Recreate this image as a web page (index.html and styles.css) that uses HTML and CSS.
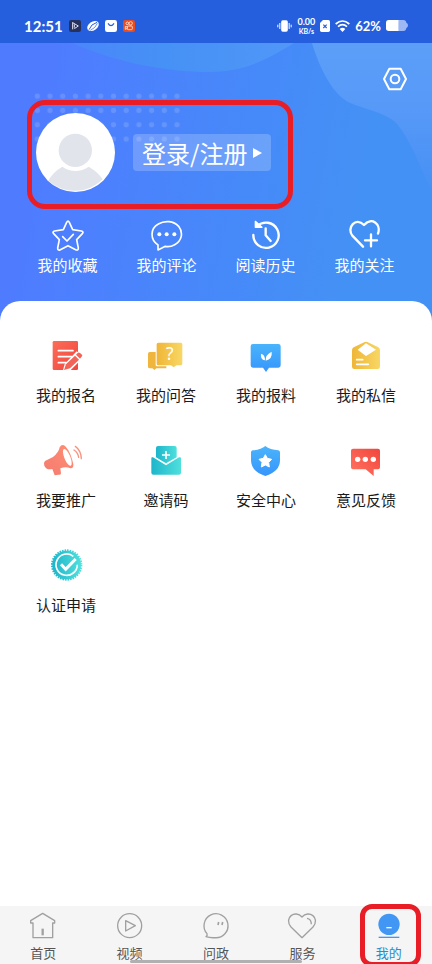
FILE: index.html
```html
<!DOCTYPE html>
<html lang="zh-CN">
<head>
<meta charset="utf-8">
<meta name="viewport" content="width=device-width, initial-scale=1">
<title>我的</title>
<link rel="stylesheet" href="styles.css">
</head>
<body>
<div class="page">
  <div class="status">
    <span class="clock">12:51</span>
    <svg class="app" viewBox="0 0 36 36"><rect width="36" height="36" rx="6" fill="#27315e"/><path d="M11 7v21M11 8l17 10-12 8M16 13v10" fill="none" stroke="#dfe5f7" stroke-width="3"/></svg>
    <svg class="app" viewBox="0 0 36 36"><ellipse cx="18" cy="18" rx="19" ry="13" transform="rotate(-35 18 18)" fill="#fff"/><path d="M6 29Q12 12 30 7" fill="none" stroke="#265fdd" stroke-width="3"/><path d="M10 31Q26 24 31 10" fill="none" stroke="#265fdd" stroke-width="2"/></svg>
    <svg class="app" viewBox="0 0 36 36"><rect width="36" height="36" rx="7" fill="#fff"/><path d="M9 10q9 14 18 0" fill="none" stroke="#265fdd" stroke-width="3.5"/></svg>
    <svg class="app" viewBox="0 0 36 36"><rect width="36" height="36" rx="6" fill="#e84c1f"/><g fill="none" stroke="#ffe9df" stroke-width="2.6"><circle cx="13" cy="10" r="4"/><circle cx="23" cy="10" r="5"/><rect x="13" y="18" width="15" height="11" rx="3"/><path d="M13 21l-6-2v9l6-3"/></g></svg>
    <div class="system">
      <svg class="vibrate" viewBox="0 0 44 36"><rect x="12" y="1" width="20" height="34" rx="5" fill="#fff"/><path d="M8 9v18M36 9v18M2 14v8M42 14v8" stroke="#fff" stroke-width="3"/></svg>
      <span class="speed"><span class="rate">0.00</span><span class="unit">KB/s</span></span>
      <svg class="sim" viewBox="0 0 30 36"><path d="M9 0h16q5 0 5 5v26q0 5-5 5H5q-5 0-5-5V9z" fill="#fff"/><path d="M10 14l10 10M20 14L10 24" stroke="#265fdd" stroke-width="3.5"/></svg>
      <svg class="wifi" viewBox="0 0 45 36"><g fill="none" stroke="#fff" stroke-width="5"><path d="M2 12q20.500-18 41 0M9 20q13.500-12 27 0"/></g><path d="M14 27q8.500-7 17 0l-8.500 9z" fill="#fff"/></svg>
      <span class="percent">62%</span>
      <svg class="battery" viewBox="0 0 66 33"><path d="M38 0h14q8 0 9 8 5 2 5 8t-5 8q-1 9-9 9H38z" fill="#9db8f5"/><path d="M8 0h30v33H8q-8 0-8-8V8q0-8 8-8z" fill="#fff"/></svg>
    </div>
  </div>

  <header class="hero">
    <svg class="backdrop" viewBox="0 0 432 278" preserveAspectRatio="none" aria-hidden="true">
      <defs>
        <linearGradient id="arc" x1="0" x2="1"><stop offset="0" stop-color="#4a86fb"/><stop offset=".4" stop-color="#4691f5"/><stop offset="1" stop-color="#5097f8"/></linearGradient>
        <linearGradient id="wave" x1="0" y1="0" x2="0" y2="1"><stop offset="0" stop-color="#5c9ff9"/><stop offset=".5" stop-color="#5598f7"/><stop offset="1" stop-color="#4690f5"/></linearGradient>
        <pattern id="dots" x="31" y="46" width="12.700" height="14.300" patternUnits="userSpaceOnUse"><circle cx="6.300" cy="7.200" r="2.600" fill="#fff" fill-opacity=".14"/></pattern>
      </defs>
      <path d="M72 0C115 19 165 29 210 29C242 28 262 20 294 0z" fill="url(#arc)"/>
      <path d="M312 0C319 24 332 50 348 59C363 66 388 70 397 81C412 99 420 124 432 148V0z" fill="url(#wave)"/>
      <rect x="31" y="46" width="152.400" height="57.200" fill="url(#dots)"/>
    </svg>
    <button class="settings" aria-label="设置"><svg viewBox="0 0 72 72"><g fill="none" stroke="#fff" stroke-width="6" stroke-linejoin="round"><path d="M19 5h34l16 31-16 31H19L3 36z"/><circle cx="36" cy="36" r="13"/></g></svg></button>
    <div class="account">
      <svg class="avatar" viewBox="0 0 237 237" aria-hidden="true"><circle cx="118.500" cy="118.500" r="118.500" fill="#fff"/><circle cx="118" cy="112" r="50" fill="#e1e4eb"/><path d="M37 203q14-26 42-42q39 26 79 0q28 16 42 38a118.500 118.500 0 0 1-163 4z" fill="#e1e4eb"/></svg>
      <button class="login"><span>登录/注册</span><svg viewBox="0 0 9 10"><path d="M0 0l9 5-9 5z" fill="#fff"/></svg></button>
    </div>
    <nav class="quick">
      <a href="#fav"><svg viewBox="0 0 96 96"><path d="M44 10q4-7 8 0l10 22 26 4q8 2 3 8L74 62l5 25q0 9-8 5L48 80 25 92q-8 4-8-5l5-25L5 44q-5-6 3-8l26-4z" stroke-width="5"/><path d="M32 53l13 13 19-20" stroke-width="5"/></svg>我的收藏</a>
      <a href="#comments"><svg viewBox="0 0 96 96"><path d="M21 93V78C-4 62-2 28 22 15C42 3 68 6 83 22C98 42 92 66 71 77C62 82 52 84 43 82z" stroke-width="5"/><g fill="#fff" stroke="none"><circle cx="25" cy="46" r="6"/><circle cx="47" cy="46" r="6"/><circle cx="70" cy="46" r="6"/></g></svg>我的评论</a>
      <a href="#history"><svg viewBox="0 0 96 96"><path d="M22 21A38 38 0 1 1 10 48" stroke-width="7"/><path d="M16 7v18h20z" fill="#fff" stroke-width="4"/><path d="M47 28v21l15 17" stroke-width="7"/></svg>阅读历史</a>
      <a href="#follow"><svg viewBox="0 0 96 96"><path d="M42 83L10 50C-8 26 20-8 45 18C68-8 97 15 87 44M66 46v36M48 64h36" stroke-width="7"/></svg>我的关注</a>
    </nav>
    <div class="mark mark-login" aria-hidden="true"></div>
  </header>

  <main class="sheet">
    <svg class="defs" aria-hidden="true"><defs>
      <linearGradient id="red" x1="0" y1="0" x2="1" y2="1"><stop offset="0" stop-color="#fb6d58"/><stop offset="1" stop-color="#f1453d"/></linearGradient>
      <linearGradient id="redr" x1="1" y1="0" x2="0" y2="1"><stop offset="0" stop-color="#f2453c"/><stop offset="1" stop-color="#ff7662"/></linearGradient>
      <linearGradient id="gold" x1="0" x2="1"><stop offset="0" stop-color="#efb637"/><stop offset="1" stop-color="#f8d765"/></linearGradient>
      <linearGradient id="blue" x1="0" y1="0" x2="0" y2="1"><stop offset="0" stop-color="#4ab4fb"/><stop offset="1" stop-color="#3695fc"/></linearGradient>
      <linearGradient id="coral" x1="0" y1="1" x2="1" y2="0"><stop offset="0" stop-color="#f47b70"/><stop offset="1" stop-color="#ff8e74"/></linearGradient>
      <linearGradient id="teal" x1="0" x2="1"><stop offset="0" stop-color="#1db5cb"/><stop offset="1" stop-color="#4fe0dc"/></linearGradient>
    </defs></svg>
    <nav class="grid">
      <a href="#signup"><svg viewBox="0 0 108 108"><rect x="14" y="9" width="76" height="87" rx="4" fill="url(#red)"/><path d="M31 38h44M31 56h40M31 74h24" stroke="#fff" stroke-width="5" stroke-linecap="round"/><path d="M44 100l6-22 36-38 22 16-42 42z" fill="#fff"/><path d="M48 96l6-17 27-26 12 12-27 26z" fill="#f26457"/><path d="M84 50l6-6q3-2 6 1l6 5q2 3 0 5l-6 7z" fill="#f26457"/></svg>我的报名</a>
      <a href="#qa"><svg viewBox="0 0 108 108"><path d="M5 42h18v39q0 4 4 4h28v6H25l-6 5-6-5H5q-5 0-5-5V47q0-5 5-5z" fill="#f0b53c"/><path d="M31 14h67q5 0 5 5v58q0 5-5 5H85l-8 6-8-6H31q-5 0-5-5V19q0-5 5-5z" fill="url(#gold)"/><text class="glyph" x="65" y="67" text-anchor="middle">?</text></svg>我的问答</a>
      <a href="#tips"><svg viewBox="0 0 108 108"><path d="M15 18h76q7 0 7 7v57q0 7-7 7H63l-9 13-9-13H15q-7 0-7-7V25q0-7 7-7z" fill="url(#blue)"/><path d="M53 68q-1-18 18-27 3 22-18 27zM51 67q-15-2-12-20 12 2 12 20z" fill="#fff"/></svg>我的报料</a>
      <a href="#messages"><svg viewBox="0 0 108 108"><path d="M50 12q4-2 8 0l33 16q5 3 5 8v50q0 7-7 7H19q-7 0-7-7V36q0-5 5-8z" fill="url(#gold)"/><path d="M54 16l30 19-30 19-25-19z" fill="#fff"/><path d="M26 65h18M26 79h35" stroke="#fff" stroke-width="5" stroke-linecap="round"/></svg>我的私信</a>
      <a href="#promo"><svg viewBox="0 0 108 108"><path d="M-9 54L15 42Q32 29 35 13Q42 0 52 10Q68 27 76 64Q77 77 67 76Q54 70 37 76L39 91Q38 97 31 95L20 97L13 78Q-5 82-11 68Q-14 59-9 54z" fill="url(#coral)"/><ellipse cx="58" cy="43" rx="9" ry="27" transform="rotate(-22 58 43)" fill="#fff"/><path d="M78 21q12 8 14 22M82 10q17 12 18 37" fill="none" stroke="#f6937f" stroke-width="4" stroke-linecap="round"/></svg>我要推广</a>
      <a href="#invite"><svg viewBox="0 0 108 108"><path d="M30 9h50q6 0 6 6v28L54 61 24 43V15q0-6 6-6z" fill="url(#teal)"/><path d="M10 46q0-5 5-3l39 24 39-24q6-2 6 3v43q0 6-6 6H16q-6 0-6-6z" fill="url(#teal)"/><path d="M54 24v24M42 36h24" stroke="#fff" stroke-width="5"/></svg>邀请码</a>
      <a href="#security"><svg viewBox="0 0 108 108"><path d="M52 9q14 11 39 13 5 1 5 6v24q0 33-44 47Q9 85 9 52V28q0-5 5-6 25-2 38-13z" fill="url(#blue)"/><path d="M52 35l6 11 13 3-9 9 2 14-12-6-12 6 2-14-9-9 13-3z" fill="#fff" stroke="#fff" stroke-width="3" stroke-linejoin="round"/></svg>安全中心</a>
      <a href="#feedback"><svg viewBox="0 0 108 108"><path d="M15 17h75q6 0 6 6v50q0 6-6 6H77v20L53 79H15q-6 0-6-6V23q0-6 6-6z" fill="url(#redr)"/><g fill="#fff"><circle cx="29" cy="49" r="8"/><circle cx="52" cy="49" r="8"/><circle cx="76" cy="49" r="8"/></g></svg>意见反馈</a>
      <a href="#verify"><svg viewBox="0 0 108 108"><circle cx="56" cy="51" r="43" fill="url(#teal)"/><circle cx="56" cy="51" r="44" fill="none" stroke="url(#teal)" stroke-width="6" stroke-dasharray="4.600 3.080"/><path d="M76 25A32 32 0 1 0 88 50" fill="none" stroke="#fff" stroke-width="5"/><path d="M39 49l14 15 30-31" fill="none" stroke="#fff" stroke-width="9"/></svg>认证申请</a>
    </nav>
  </main>

  <nav class="tabs">
    <a href="#home"><svg viewBox="0 0 84 84"><path d="M41 4l36 22v7h-6v44H12V33H5v-7z"/><path d="M41 50v20" stroke-width="7"/></svg>首页</a>
    <a href="#video"><svg viewBox="0 0 84 84"><circle cx="41" cy="41" r="36"/><path d="M29 26l29 15-29 16z"/></svg>视频</a>
    <a href="#ask"><svg viewBox="0 0 84 84"><path d="M15 65A36 36 0 1 1 38 77q-14 1-26-3 5-3 3-9z"/><path d="M50 30l-2 9M62 30l-2 9" stroke-width="5"/></svg>问政</a>
    <a href="#service"><svg viewBox="0 0 84 84"><path d="M42 77L9 45C-14 17 22-8 42 15C62-8 98 17 75 45z"/><path d="M57 19q13 2 13 18"/></svg>服务</a>
    <a href="#me" class="current" aria-current="page"><svg viewBox="0 0 84 84"><circle cx="42" cy="37" r="32" fill="#4297f5" stroke="none"/><path d="M34 47h16" stroke="#fff" stroke-width="4"/><path d="M11 76h62" stroke="#4297f5" stroke-width="4"/></svg>我的<span class="mark mark-tab" aria-hidden="true"></span></a>
    <div class="handle" aria-hidden="true"></div>
  </nav>
</div>
</body>
</html>
```
FILE: styles.css
```css
* { box-sizing: border-box; }

body {
  margin: 0;
  background: #fff;
  color: #1a1a1a;
  font-family: "Noto Sans CJK SC", sans-serif;
}

a { color: inherit; text-decoration: none; }

button {
  border: 0;
  padding: 0;
  background: none;
  color: inherit;
  font: inherit;
  cursor: pointer;
}

svg { display: block; flex: none; }

.page {
  display: flex;
  flex-direction: column;
  min-height: 100vh;
  overflow: clip;
}

/* Status bar */
.status {
  display: flex;
  align-items: center;
  gap: 6px;
  height: 43px;
  padding: 8px 24px 0;
  background: #265fdd;
  color: #fff;
  font-family: Lato, sans-serif;
  font-weight: 700;
}
.clock { font-size: 15px; line-height: 20px; }
.app { width: 12px; height: 12px; }
.system { display: flex; align-items: center; gap: 5px; margin-left: auto; }
.vibrate { width: 15px; height: 12px; }
.speed {
  display: flex;
  flex-direction: column;
  align-items: center;
}
.rate { font-size: 9px; line-height: 10px; }
.unit { font-size: 7px; line-height: 8px; }
.sim { width: 10px; height: 12px; }
.wifi { width: 15px; height: 12px; }
.percent { font-size: 13px; line-height: 20px; }
.battery { width: 22px; height: 11px; }

/* Profile header */
.hero {
  position: relative;
  padding: 24px 16px 46px;
  background: linear-gradient(100deg, #4f7cff 12%, #4689f9 55%, #4491f5 80%);
  color: #fff;
}
.backdrop { position: absolute; inset: 0; width: 100%; height: 100%; }
.settings { position: relative; display: block; margin: 0 9px 0 auto; }
.settings svg { width: 24px; height: 24px; }
.account {
  position: relative;
  display: flex;
  align-items: center;
  gap: 18px;
  margin-top: 22px;
  padding-left: 20px;
}
.avatar { width: 79px; height: 79px; }
.login {
  display: flex;
  align-items: center;
  gap: 6px;
  padding: 0 9px;
  border-radius: 4px;
  background: rgb(255 255 255 / 20%);
  font-size: 24px;
  line-height: 37px;
}
.login svg { width: 9px; height: 10px; }
.quick {
  position: relative;
  display: grid;
  grid-template-columns: repeat(4, 1fr);
  margin-top: 27px;
  padding: 0 2px;
}
.quick a {
  display: flex;
  flex-direction: column;
  align-items: center;
  gap: 4px;
  font-size: 15px;
  line-height: 20px;
}
.quick svg {
  width: 32px;
  height: 32px;
  fill: none;
  stroke: #fff;
  stroke-linecap: round;
  stroke-linejoin: round;
}

/* Service grid */
.sheet {
  position: relative;
  flex: 1;
  margin-top: -20px;
  padding: 37px 16px;
  border-radius: 20px 20px 0 0;
  background: #fff;
}
.defs { position: absolute; width: 0; height: 0; }
.grid { display: grid; grid-template-columns: repeat(4, 1fr); row-gap: 38px; }
.grid a {
  display: flex;
  flex-direction: column;
  align-items: center;
  gap: 11px;
  font-size: 15px;
  line-height: 20px;
}
.grid svg { width: 36px; height: 36px; overflow: visible; }
.glyph { fill: #fff; font: 52px "Noto Sans", sans-serif; }

/* Tab bar */
.tabs {
  position: relative;
  display: grid;
  grid-template-columns: repeat(5, 1fr);
  background: #f5f5f5;
  color: #555;
}
.tabs a {
  position: relative;
  display: flex;
  flex-direction: column;
  align-items: center;
  gap: 4px;
  padding: 6px 0 2px;
  font-size: 13px;
  line-height: 18px;
}
.tabs svg {
  width: 28px;
  height: 28px;
  overflow: visible;
  fill: none;
  stroke: #a0a0a0;
  stroke-width: 4px;
  stroke-linejoin: round;
}
.tabs .current { color: #2b8ccb; }
.handle {
  position: absolute;
  left: 30%;
  right: 30%;
  bottom: 1px;
  height: 3px;
  border-radius: 2px;
  background: #b0b0b0;
}

/* Highlight frames */
.mark { position: absolute; border: 5px solid #e91d25; pointer-events: none; }
.mark-login { top: 57px; left: 27px; width: 266px; height: 109px; border-radius: 18px; }
.mark-tab { top: -2px; right: 11px; bottom: -3px; left: 14px; border-radius: 12px; }
```
